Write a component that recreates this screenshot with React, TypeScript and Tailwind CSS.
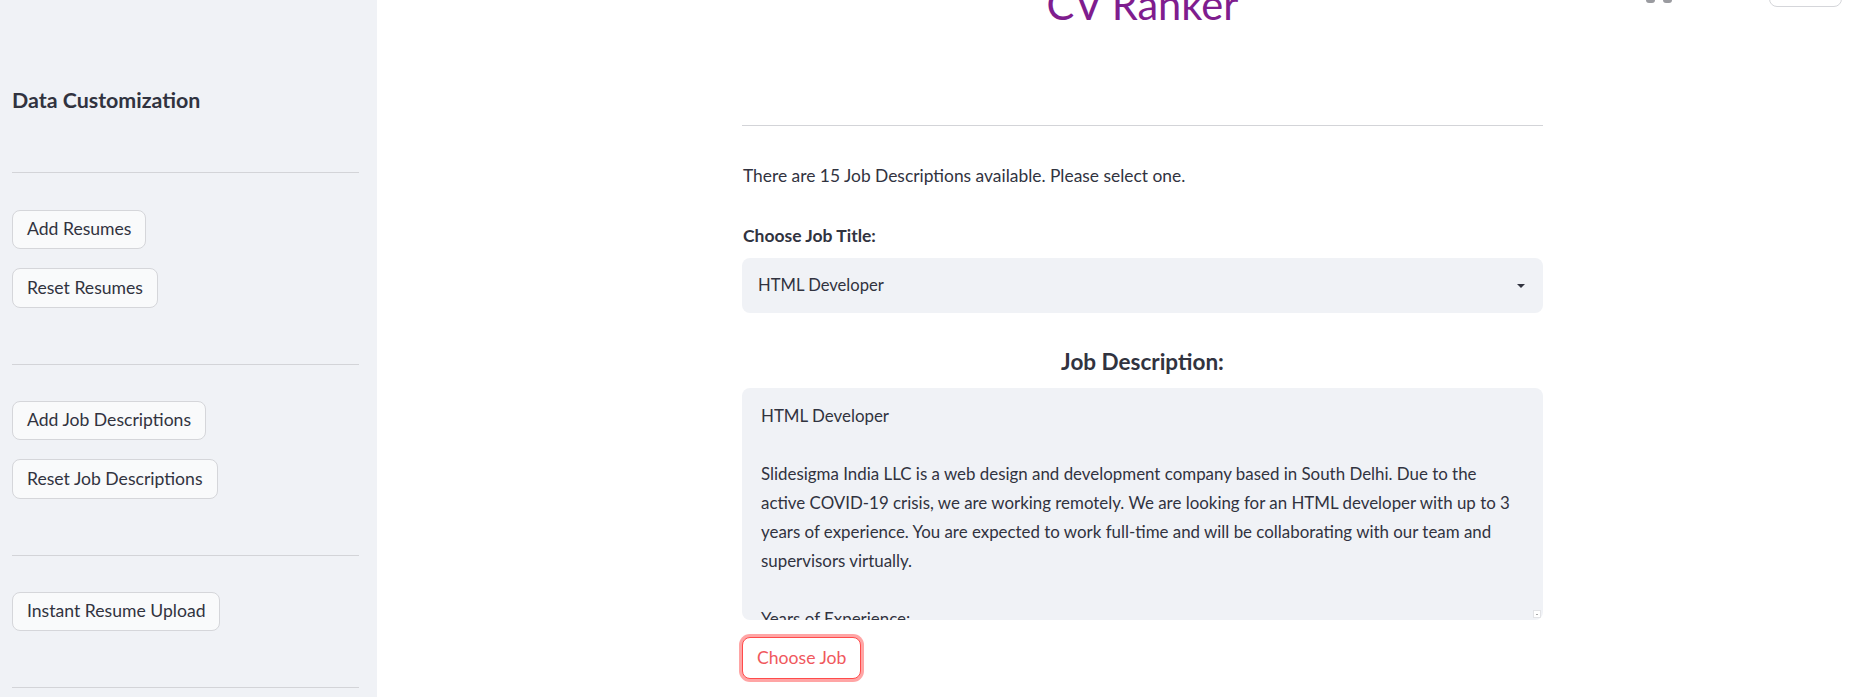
import React from 'react';

const sidebarBtn =
  'h-[39px] self-start rounded-[8px] border border-[#d5d6da] bg-[#f9fafb] px-[14px] text-[17.6px] text-[#31333f]';

function SidebarButton({ label, className = '' }: { label: string; className?: string }) {
  return <button className={`${sidebarBtn} ${className}`}>{label}</button>;
}

function Divider({ className = '' }: { className?: string }) {
  return <div className={`h-px bg-[#d3d4d8] ${className}`} />;
}

const description = [
  'HTML Developer',
  '',
  'Slidesigma India LLC is a web design and development company based in South Delhi. Due to the',
  'active COVID-19 crisis, we are working remotely. We are looking for an HTML developer with up to 3',
  'years of experience. You are expected to work full-time and will be collaborating with our team and',
  'supervisors virtually.',
  '',
  'Years of Experience:',
];

export default function App() {
  return (
    <div className="relative flex h-[697px] w-[1852px] overflow-hidden bg-white font-['Lato',sans-serif] text-[#31333f]">
      {/* sidebar */}
      <aside className="flex w-[377px] shrink-0 flex-col bg-[#f0f2f6] pl-[12px] pr-[18px]">
        <h3 className="mt-[86px] text-[21.4px] font-bold leading-[28px]">Data Customization</h3>
        <Divider className="mt-[58px]" />
        <SidebarButton label="Add Resumes" className="mt-[37px]" />
        <SidebarButton label="Reset Resumes" className="mt-[19px] h-[40px]" />
        <Divider className="mt-[56px]" />
        <SidebarButton label="Add Job Descriptions" className="mt-[36px]" />
        <SidebarButton label="Reset Job Descriptions" className="mt-[19px] h-[40px]" />
        <Divider className="mt-[56px]" />
        <SidebarButton label="Instant Resume Upload" className="mt-[36px]" />
        <Divider className="mt-[56px]" />
      </aside>

      {/* main */}
      <main className="flex-1">
        <div className="ml-[365px] flex w-[801px] flex-col">
          <h1 className="-mt-[24px] text-center text-[41.6px] leading-[56px] text-[#7f1d8e]">CV Ranker</h1>
          <Divider className="mt-[93px]" />
          <p className="mt-[36px] pl-[1px] text-[17.4px] leading-[28px]">
            There are 15 Job Descriptions available. Please select one.
          </p>
          <label className="mt-[35px] pl-[1px] text-[17.5px] font-bold leading-[22px]">Choose Job Title:</label>
          <div className="mt-[11px] flex h-[55px] items-center justify-between rounded-[8px] bg-[#f0f2f6] pl-[16px] pr-[17px]">
            <span className="text-[16.6px]">HTML Developer</span>
            <svg width="10" height="6" viewBox="0 0 10 6">
              <path d="M1 1h8L5 5z" fill="#31333f" />
            </svg>
          </div>
          <h4 className="mt-[35px] text-center text-[22.5px] font-bold leading-[28px]">Job Description:</h4>
          <div className="relative mt-[12px] h-[232px] overflow-hidden rounded-[8px] bg-[#f0f2f6] pl-[19px] pt-[13px]">
            {description.map((line, i) => (
              <div key={i} className="h-[29px] whitespace-pre text-[16.9px] leading-[29px]">
                {line}
              </div>
            ))}
            <svg className="absolute bottom-[2px] right-[2px]" width="8" height="8" viewBox="0 0 8 8">
              <rect x="0.5" y="0.5" width="7" height="7" fill="#fff" stroke="#e2e3e6" />
              <path d="M3 4h2L4 5z" fill="#555" />
            </svg>
          </div>
          <div className="mt-[17px]">
            <button className="h-[42px] rounded-[8px] border border-[#ff4b4b] bg-white px-[14px] text-[17.6px] text-[#f0585d] ring-[3px] ring-[#ff4b4b]/50">
              Choose Job
            </button>
          </div>
        </div>
      </main>

      {/* streamlit toolbar, mostly scrolled off the top */}
      <div className="absolute right-[10px] top-0 flex items-start gap-[97px]">
        <div className="flex gap-[8px]">
          <span className="h-[3px] w-[9px] rounded-b-full bg-[#9a9ba0]" />
          <span className="h-[3px] w-[9px] rounded-b-full bg-[#9a9ba0]" />
        </div>
        <div className="-mt-[30px] h-[37px] w-[73px] rounded-[8px] border border-[#d5d6da] bg-white" />
      </div>
    </div>
  );
}
